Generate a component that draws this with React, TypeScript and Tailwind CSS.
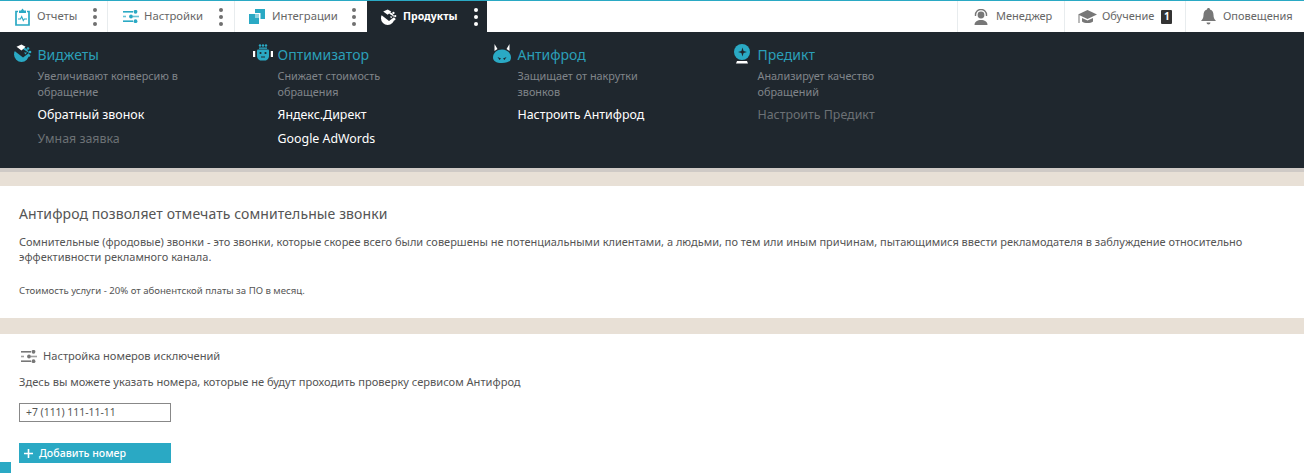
import type { ReactNode } from "react";

const font = "font-['Noto_Sans','Open_Sans',sans-serif]";

const Dots = ({ light }: { light?: boolean }) => (
  <div className="flex flex-col gap-[3px]">
    {[0, 1, 2].map((i) => (
      <span key={i} className={`block w-[4px] h-[4px] rounded-full ${light ? "bg-white" : "bg-[#707070]"}`} />
    ))}
  </div>
);

const ReportIcon = () => (
  <svg width="15" height="18" viewBox="0 0 15 18">
    <path d="M3 3.500H1v13.500h13V3.500h-2" fill="none" stroke="#2aa9c4" strokeWidth="1.700" />
    <path d="M4 5V2.500h2L7.500 0.500 9 2.500h2V5z" fill="#2aa9c4" />
    <path d="M3 11h2.500l1.200-2.500 1.600 4 1-1.500h2.700" fill="none" stroke="#2aa9c4" strokeWidth="1.100" />
  </svg>
);

const SlidersIcon = ({ color }: { color: string }) => (
  <svg width="16" height="13" viewBox="0 0 16 13" fill={color}>
    <rect x="0" y="1" width="10" height="1.600" />
    <circle cx="12.500" cy="1.800" r="1.900" />
    <rect x="0" y="5.700" width="3" height="1.600" opacity="0.7" />
    <circle cx="8" cy="6.500" r="1.900" />
    <rect x="10" y="5.700" width="6" height="1.600" opacity="0.7" />
    <rect x="0" y="10.400" width="10" height="1.600" />
    <circle cx="12.500" cy="11.200" r="1.900" />
  </svg>
);

const IntegrationIcon = () => (
  <svg width="16" height="15" viewBox="0 0 16 15">
    <rect x="6" y="0" width="10" height="10" fill="#2aa9c4" />
    <rect x="5" y="4" width="6.500" height="6.500" fill="#fff" />
    <rect x="0" y="5" width="10" height="10" fill="#2aa9c4" />
    <rect x="6" y="5" width="4" height="4" fill="#8fd3e2" />
  </svg>
);

const WidgetIcon = ({ color, size = 18 }: { color: string; size?: number }) => (
  <svg width={size} height={size} viewBox="0 0 18 18">
    <circle cx="7.500" cy="10.500" r="7.500" fill={color} />
    <path d="M0 6.500L9 13.500 15 9 9 5 2 2z" fill="#1f272e" />
    <path d="M2.500 2.800L7.500 0.500 11.500 2.800 7.500 6.500z" fill="#fff" />
    <circle cx="14" cy="4.500" r="1.300" fill={color} />
    <circle cx="16" cy="8" r="1.300" fill={color} />
    <circle cx="15" cy="11.500" r="1.300" fill={color} />
    <path d="M10 8.500l3 0-1.500 2z" fill={color} />
  </svg>
);

const RobotIcon = () => (
  <svg width="20" height="20" viewBox="0 0 20 20" fill="#2aa9c4">
    <circle cx="7" cy="1.500" r="1.200" />
    <circle cx="10" cy="1.500" r="1.200" />
    <circle cx="13" cy="1.500" r="1.200" />
    <rect x="6" y="3.500" width="8" height="1.300" />
    <path d="M5 5.500h10a1 1 0 0 1 1 1V12c0 2-1.500 4.500-4 4.500H8c-2.500 0-4-2.500-4-4.500V6.500a1 1 0 0 1 1-1z" />
    <rect x="0" y="7" width="2.200" height="6" fill="#fff" />
    <rect x="17.800" y="7" width="2.200" height="6" fill="#fff" />
    <circle cx="7.500" cy="9" r="1.100" fill="#1f272e" />
    <circle cx="12.500" cy="9" r="1.100" fill="#1f272e" />
    <rect x="8" y="12.500" width="4" height="1" fill="#1f272e" />
  </svg>
);

const DevilIcon = () => (
  <svg width="18" height="20" viewBox="0 0 18 20">
    <path d="M1.500 0L4.500 5 1.500 7zM16.500 0L13.500 5 16.500 7z" fill="#fff" />
    <path d="M9 5.500c5 0 9 3.500 9 8 0 3.500-3 5.500-9 5.500s-9-2-9-5.500c0-4.500 4-8 9-8z" fill="#2aa9c4" />
    <path d="M4.500 13l3.500 1.500-1.500 1.500zM13.500 13l-3.500 1.500 1.500 1.500z" fill="#1f272e" />
  </svg>
);

const BallIcon = () => (
  <svg width="18" height="20" viewBox="0 0 18 20">
    <circle cx="9" cy="8" r="8" fill="#2aa9c4" />
    <path d="M9.500 3.500l1.100 3.400 3.400 1.100-3.400 1.100-1.100 3.400-1.100-3.400-3.400-1.100 3.400-1.100z" fill="#1f272e" />
    <path d="M4 17h10l1 2.500H3z" fill="#fff" />
  </svg>
);

const ManagerIcon = () => (
  <svg width="16" height="16" viewBox="0 0 16 16" fill="#777">
    <circle cx="8" cy="6" r="3.400" />
    <path d="M2.500 7V6a5.500 5.500 0 0 1 11 0v1" fill="none" stroke="#777" strokeWidth="1.400" />
    <path d="M1.500 16c0-3.500 3-5 6.500-5s6.500 1.500 6.500 5z" />
  </svg>
);

const HatIcon = () => (
  <svg width="19" height="16" viewBox="0 0 19 16" fill="#777">
    <path d="M9.500 1L19 5.500 9.500 10 0 5.500z" />
    <path d="M4 9v3.500c2.500 2 8.500 2 11 0V9l-5.500 2.600z" />
    <rect x="0.500" y="6" width="1" height="8" />
  </svg>
);

const BellIcon = () => (
  <svg width="15" height="17" viewBox="0 0 15 17" fill="#777">
    <path d="M7.500 0c1 0 1.500.6 1.500 1.500C11.500 2.300 12.500 4.500 12.500 7c0 3 1 4.500 2.500 6H0c1.500-1.500 2.500-3 2.500-6 0-2.500 1-4.700 3.500-5.500C6 .6 6.500 0 7.500 0z" />
    <path d="M5.500 14.500h4a2 2 0 0 1-4 0z" />
  </svg>
);

const Tab = ({ icon, label, className }: { icon: ReactNode; label: string; className: string }) => (
  <div className={`flex items-center border-r border-[#e8ecee] ${className}`}>
    {icon}
    <span className="text-[11.300px] text-[#666]">{label}</span>
    <div className="ml-auto">
      <Dots />
    </div>
  </div>
);

const RightTab = ({ icon, children, className }: { icon: ReactNode; children: ReactNode; className: string }) => (
  <div className={`flex items-center border-l border-[#e8ecee] text-[11px] text-[#666] ${className}`}>
    {icon}
    {children}
  </div>
);

const Column = ({
  icon,
  title,
  desc,
  links,
}: {
  icon: ReactNode;
  title: string;
  desc: string[];
  links: { text: string; off?: boolean }[];
}) => (
  <div className="w-[240px] flex flex-col">
    <div className="relative flex items-center h-[19px] pl-[23.500px]">
      <div className="absolute -left-[1px] -top-[1px]">{icon}</div>
      <span className="text-[14px] text-[#2b9fb8]">{title}</span>
    </div>
    <div className="ml-[23.500px] mt-[4px] text-[10.850px] leading-[16px] text-[#80858a]">
      {desc.map((d) => (
        <div key={d}>{d}</div>
      ))}
    </div>
    <div className="ml-[23.500px] mt-[7px] flex flex-col gap-[8px]">
      {links.map((l) => (
        <div key={l.text} className={`text-[12.400px] leading-[16px] ${l.off ? "text-[#6c7175]" : "text-white"}`}>
          {l.text}
        </div>
      ))}
    </div>
  </div>
);

export default function App() {
  return (
    <div className={`relative h-[473px] w-full overflow-hidden bg-white ${font}`}>
      {/* Top menu */}
      <div className="flex h-[32px] border-t border-[#2aa9c4] bg-white">
        <Tab icon={<ReportIcon />} label="Отчеты" className="w-[108px] pl-[15px] pr-[10px] gap-[7px]" />
        <Tab
          icon={<SlidersIcon color="#2aa9c4" />}
          label="Настройки"
          className="w-[127px] pl-[15px] pr-[11px] gap-[5px]"
        />
        <div className="flex items-center w-[132px] pl-[14px] pr-[11px] gap-[7px]">
          <IntegrationIcon />
          <span className="text-[11.300px] text-[#666]">Интеграции</span>
          <div className="ml-auto">
            <Dots />
          </div>
        </div>
        <div className="flex items-center w-[120px] bg-[#1f272e] pl-[14px] pr-[9px] gap-[6px]">
          <WidgetIcon color="#fff" size={16} />
          <span className="text-[10.500px] font-bold text-white">Продукты</span>
          <div className="ml-auto">
            <Dots light />
          </div>
        </div>
        <div className="ml-auto flex">
          <RightTab icon={<ManagerIcon />} className="w-[107px] pl-[15px] gap-[7px]">
            Менеджер
          </RightTab>
          <RightTab icon={<HatIcon />} className="w-[121px] pl-[13px] gap-[5px]">
            Обучение
            <span className="ml-[2px] flex h-[14px] w-[11px] items-center justify-center rounded-[1px] bg-[#333] text-[10px] font-bold text-white">
              1
            </span>
          </RightTab>
          <RightTab icon={<BellIcon />} className="w-[119px] pl-[15px] gap-[7px]">
            Оповещения
          </RightTab>
        </div>
      </div>

      {/* Products dropdown */}
      <div className="flex h-[136px] bg-[#1f272e] pl-[14px] pt-[13px]">
        <Column
          icon={
            <div className="ml-[1px]">
              <WidgetIcon color="#2aa9c4" />
            </div>
          }
          title="Виджеты"
          desc={["Увеличивают конверсию в", "обращение"]}
          links={[{ text: "Обратный звонок" }, { text: "Умная заявка", off: true }]}
        />
        <Column
          icon={<RobotIcon />}
          title="Оптимизатор"
          desc={["Снижает стоимость", "обращения"]}
          links={[{ text: "Яндекс.Директ" }, { text: "Google AdWords" }]}
        />
        <Column
          icon={<DevilIcon />}
          title="Антифрод"
          desc={["Защищает от накрутки", "звонков"]}
          links={[{ text: "Настроить Антифрод" }]}
        />
        <Column
          icon={<BallIcon />}
          title="Предикт"
          desc={["Анализирует качество", "обращений"]}
          links={[{ text: "Настроить Предикт", off: true }]}
        />
      </div>

      <div className="h-[4px] bg-[#cfcac6]" />
      <div className="h-[14px] bg-[#e8e0d6]" />

      {/* Description */}
      <div className="h-[132px] px-[19px] pt-[20px] text-[#555]">
        <h2 className="text-[14px] leading-[16px] tracking-[0.1px]">Антифрод позволяет отмечать сомнительные звонки</h2>
        <p className="mt-[12px] text-[11px] leading-[15px]">
          Сомнительные (фродовые) звонки - это звонки, которые скорее всего были совершены не потенциальными
          клиентами, а людьми, по тем или иным причинам, пытающимися ввести рекламодателя в заблуждение относительно
          эффективности рекламного канала.
        </p>
        <p className="mt-[20px] text-[9.600px] leading-[14px]">Стоимость услуги - 20% от абонентской платы за ПО в месяц.</p>
      </div>

      <div className="h-[16px] bg-[#e8e0d6]" />

      {/* Exceptions */}
      <div className="px-[19px] pt-[14px] text-[#555]">
        <div className="flex items-center gap-[6px] pl-[2px] h-[16px]">
          <SlidersIcon color="#777" />
          <span className="text-[11.100px]">Настройка номеров исключений</span>
        </div>
        <p className="mt-[10px] text-[11.100px] leading-[15px]">
          Здесь вы можете указать номера, которые не будут проходить проверку сервисом Антифрод
        </p>
        <div className="mt-[14px] flex h-[19px] w-[152px] items-center border border-[#888] pl-[6px] text-[10.400px]">
          +7 (111) 111-11-11
        </div>
        <button className="mt-[21px] flex h-[20px] w-[152px] items-center gap-[6px] bg-[#2aa9c4] pl-[5px] pt-[1px] text-[10.600px] font-medium text-white">
          <svg width="9" height="9" viewBox="0 0 9 9" fill="#fff">
            <path d="M3.700 0h1.600v3.700H9v1.600H5.300V9H3.700V5.300H0V3.700h3.700z" />
          </svg>
          Добавить номер
        </button>
      </div>

      <div className="absolute bottom-0 left-0 h-[11px] w-[11px] bg-[#2aa9c4]" />
    </div>
  );
}
